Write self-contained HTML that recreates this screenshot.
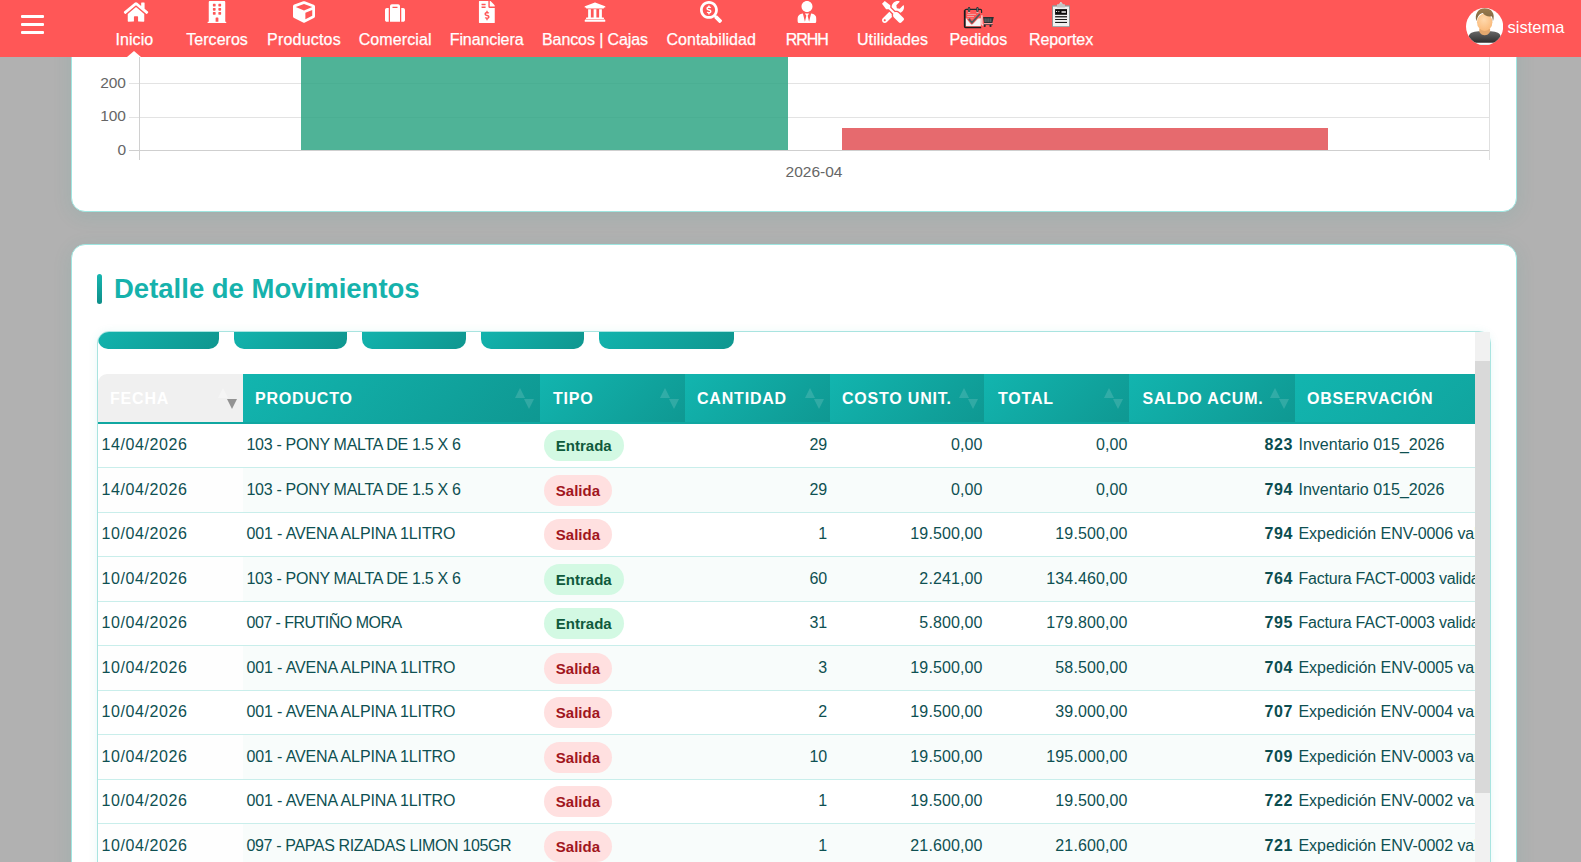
<!DOCTYPE html>
<html lang="es">
<head>
<meta charset="utf-8">
<title>Kardex - Detalle de Movimientos</title>
<style>
*{box-sizing:border-box;margin:0;padding:0}
html,body{width:1581px;height:862px;overflow:hidden}
body{background:#b1b1b1;font-family:"Liberation Sans",sans-serif;position:relative}
/* NAV */
#nav{position:absolute;left:0;top:0;width:1581px;height:57px;background:#ff5757;z-index:10}
#burger{position:absolute;left:21px;top:15px;width:23px;height:21px}
#burger i{display:block;height:3.4px;background:#fff;margin-bottom:4.4px;border-radius:1px;width:22.5px}
.ni{position:absolute;top:0;height:57px;text-align:center;color:#fff;font-size:16px;white-space:nowrap;transform:translateX(-50%)}
.ni span{position:absolute;left:50%;transform:translateX(-50%);top:30px;line-height:20px;-webkit-text-stroke:.25px #fff}
.ni svg{position:absolute;left:50%;transform:translateX(-50%);top:1px}
#tri{position:absolute;left:127px;top:51px;width:0;height:0;border-left:7px solid transparent;border-right:7px solid transparent;border-bottom:6px solid #fff}
#uname{position:absolute;left:1507.5px;top:17px;font-size:16.5px;line-height:20px;color:#fff}
/* CARDS */
.card{position:absolute;left:71px;width:1446px;background:#fff;border:1px solid #9fe6e1;border-radius:14px;box-shadow:0 4px 20px rgba(17,153,142,.10)}
#c1{top:-40px;height:252px}
#c2{top:244px;height:700px}
.gl{position:absolute;left:129px;width:1361px;height:1px;background:#e3e3e3}
/* TITLE */
#ttl{position:absolute;left:114px;top:274px;height:30px;font-size:27.5px;line-height:30px;font-weight:bold;color:#16b2ac;white-space:nowrap}
#ttl:before{content:"";position:absolute;left:-17px;top:0;width:5px;height:30px;border-radius:3px;background:linear-gradient(180deg,#17b6b0,#0e8e89)}
/* TABLE WRAP */
#tw{position:absolute;left:97px;top:331px;width:1394px;height:600px;border:1px solid #a9e4e0;border-radius:12px;overflow:hidden;background:#fff;box-shadow:0 1px 10px rgba(20,175,170,.10)}
.btn{position:absolute;top:0;height:17px;border-radius:0 0 10px 10px;background:linear-gradient(135deg,#12b3ad,#0f968f)}
#sb{position:absolute;left:1475px;top:332px;width:15px;height:600px;background:#f1f1f1}
#sb i{position:absolute;left:0;top:29px;width:15px;height:432px;background:#d9d9d9}
table{position:absolute;left:0;top:42px;border-collapse:separate;border-spacing:0;table-layout:fixed;width:1560px}
th{height:49.5px;background:linear-gradient(135deg,#12b5af,#0f9892);color:#fff;font-size:16px;font-weight:bold;text-align:left;padding:2px 0 0 12px;letter-spacing:.8px;border-bottom:2px solid #10a7a1;position:relative;white-space:nowrap}
th.s{background:#f0f0f0;border-top-left-radius:9px}
th b{position:absolute;right:6px;top:14px;width:19px;height:21px}
th b:before{content:"";position:absolute;left:0;top:0;border-left:5px solid transparent;border-right:5px solid transparent;border-bottom:10px solid rgba(255,255,255,.14)}
th b:after{content:"";position:absolute;right:0;top:10.5px;border-left:5px solid transparent;border-right:5px solid transparent;border-top:10px solid rgba(255,255,255,.14)}
th.s b:after{border-top-color:#939393;border-left-width:5.75px;border-right-width:5.75px;border-top-width:10px}
th.s b:before{border-bottom-color:rgba(255,255,255,.35)}
td{height:44.5px;font-size:16px;color:#0e5052;padding:0 3px .3px 3.5px;border-bottom:1px solid #c9eeeb;white-space:nowrap;overflow:hidden;letter-spacing:-0.3px}
tr:nth-child(even) td{background:#f8fcfb}
tr:nth-child(even) td:first-child{background:#fefefe}
td.r{text-align:right;letter-spacing:-.1px}
td.m{letter-spacing:.12px;padding-right:1.4px}
td:first-child{letter-spacing:.6px}
td:last-child{letter-spacing:0}
td.b{text-align:right;font-weight:bold;color:#0b4d50;letter-spacing:.5px;padding-right:2.2px}
.bd{display:inline-block;height:31px;line-height:31px;border-radius:15.5px;padding:0 12.3px;font-size:15px;font-weight:bold;letter-spacing:0;vertical-align:middle;position:relative;top:.5px}
.en{background:#d3f9e3;color:#0f5a3c}
.sa{background:#ffe0e0;color:#a1161d}
</style>
</head>
<body>
<div id="nav">
  <div id="burger"><i></i><i></i><i></i></div>
  <div class="ni" style="left:134.4px"><svg viewBox="0 0 576 512" width="24.75" height="22" style="top:1px;margin-left:1.45px"><path fill="#fff" d="M280.37 148.26L96 300.11V464a16 16 0 0 0 16 16l112.06-.29a16 16 0 0 0 15.92-16V368a16 16 0 0 1 16-16h64a16 16 0 0 1 16 16v95.64a16 16 0 0 0 16 16.05L464 480a16 16 0 0 0 16-16V300L295.67 148.26a12.19 12.19 0 0 0-15.3 0zM571.6 251.47L488 182.56V44.05a12 12 0 0 0-12-12h-56a12 12 0 0 0-12 12v72.61L318.47 43a48 48 0 0 0-61 0L4.34 251.47a12 12 0 0 0-1.6 16.9l25.5 31A12 12 0 0 0 45.15 301l235.22-193.74a12.19 12.19 0 0 1 15.3 0L530.9 301a12 12 0 0 0 16.9-1.6l25.5-31a12 12 0 0 0-1.7-16.93z"/></svg><span style="letter-spacing:0.07px">Inicio</span></div>
  <div class="ni" style="left:217.1px"><svg viewBox="0 0 448 512" width="19.25" height="22" style="top:1px;margin-left:-0.6px"><path fill="#fff" d="M436 480h-20V24c0-13.255-10.745-24-24-24H56C42.745 0 32 10.745 32 24v456H12c-6.627 0-12 5.373-12 12v20h448v-20c0-6.627-5.373-12-12-12zM128 76c0-6.627 5.373-12 12-12h40c6.627 0 12 5.373 12 12v40c0 6.627-5.373 12-12 12h-40c-6.627 0-12-5.373-12-12V76zm0 96c0-6.627 5.373-12 12-12h40c6.627 0 12 5.373 12 12v40c0 6.627-5.373 12-12 12h-40c-6.627 0-12-5.373-12-12v-40zm52 148h-40c-6.627 0-12-5.373-12-12v-40c0-6.627 5.373-12 12-12h40c6.627 0 12 5.373 12 12v40c0 6.627-5.373 12-12 12zm76 160h-64v-84c0-6.627 5.373-12 12-12h40c6.627 0 12 5.373 12 12v84zm64-172c0 6.627-5.373 12-12 12h-40c-6.627 0-12-5.373-12-12v-40c0-6.627 5.373-12 12-12h40c6.627 0 12 5.373 12 12v40zm0-96c0 6.627-5.373 12-12 12h-40c-6.627 0-12-5.373-12-12v-40c0-6.627 5.373-12 12-12h40c6.627 0 12 5.373 12 12v40zm0-96c0 6.627-5.373 12-12 12h-40c-6.627 0-12-5.373-12-12V76c0-6.627 5.373-12 12-12h40c6.627 0 12 5.373 12 12v40z"/></svg><span style="letter-spacing:0.02px">Terceros</span></div>
  <div class="ni" style="left:304px"><svg viewBox="0 0 512 512" width="22.0" height="22" style="top:1px;margin-left:-0.2px"><path fill="#fff" d="M239.1 6.3l-208 78c-18.7 7-31.1 25-31.1 45v225.1c0 18.2 10.3 34.8 26.5 42.9l208 104c13.5 6.8 29.4 6.8 42.9 0l208-104c16.3-8.1 26.5-24.8 26.5-42.9V129.3c0-20-12.4-37.9-31.1-44.9l-208-78C262 2.2 250 2.2 239.1 6.3zM256 68.4l192 72v1.1l-192 78-192-78v-1.1l192-72zm32 356V275.5l160-65v133.9l-160 80z"/></svg><span style="letter-spacing:0.2px">Productos</span></div>
  <div class="ni" style="left:395.1px"><svg viewBox="0 0 512 512" width="20.0" height="20" style="top:3px;margin-left:-0.1px"><path fill="#fff" d="M128 480h256V80c0-26.5-21.5-48-48-48H176c-26.5 0-48 21.5-48 48v400zm64-384h128v32H192V96zm320 80v256c0 26.5-21.5 48-48 48h-48V128h48c26.500 0 48 21.500 48 48zM96 480H48c-26.500 0-48-21.500-48-48V176c0-26.500 21.500-48 48-48h48v352z"/></svg><span style="letter-spacing:0.1px">Comercial</span></div>
  <div class="ni" style="left:486.6px"><svg viewBox="0 0 384 512" width="16.5" height="22" style="top:1px;margin-left:0.0px"><path fill="#fff" d="M377 105L279.1 7c-4.5-4.5-10.6-7-17-7H256v128h128v-6.1c0-6.300-2.500-12.400-7-16.900zm-153 31V0H24C10.700 0 0 10.700 0 24v464c0 13.300 10.700 24 24 24h336c13.300 0 24-10.700 24-24V160H248c-13.200 0-24-10.800-24-24zM64 72c0-4.420 3.580-8 8-8h80c4.420 0 8 3.580 8 8v16c0 4.420-3.580 8-8 8H72c-4.420 0-8-3.580-8-8V72zm0 80v-16c0-4.420 3.580-8 8-8h80c4.420 0 8 3.580 8 8v16c0 4.420-3.580 8-8 8H72c-4.420 0-8-3.580-8-8zm144 263.880V440c0 4.420-3.580 8-8 8h-16c-4.420 0-8-3.580-8-8v-24.290c-11.290-.58-22.270-4.520-31.370-11.350-3.900-2.930-4.100-8.770-.57-12.140l11.750-11.210c2.770-2.640 6.890-2.760 10.130-.73 3.870 2.420 8.260 3.720 12.820 3.720h28.110c6.500 0 11.800-5.920 11.800-13.190 0-5.950-3.610-11.190-8.770-12.730l-45-13.500c-18.590-5.580-31.580-23.420-31.580-43.390 0-24.520 19.050-44.440 42.670-45.070V232c0-4.420 3.580-8 8-8h16c4.420 0 8 3.580 8 8v24.290c11.290.58 22.270 4.510 31.370 11.350 3.900 2.930 4.100 8.770.57 12.140l-11.750 11.210c-2.770 2.640-6.890 2.760-10.130.73-3.870-2.430-8.260-3.720-12.820-3.720h-28.110c-6.500 0-11.800 5.920-11.800 13.190 0 5.950 3.610 11.190 8.770 12.730l45 13.500c18.590 5.580 31.580 23.420 31.580 43.390 0 24.530-19.050 44.440-42.670 45.070z"/></svg><span style="letter-spacing:-0.1px">Financiera</span></div>
  <div class="ni" style="left:595px"><svg viewBox="0 0 512 512" width="22.0" height="22" style="top:1px;margin-left:-0.25px"><path fill="#fff" d="M496 128v16a8 8 0 0 1-8 8h-24v12c0 6.627-5.373 12-12 12H60c-6.627 0-12-5.373-12-12v-12H24a8 8 0 0 1-8-8v-16a8 8 0 0 1 4.941-7.392l232-88a7.996 7.996 0 0 1 6.118 0l232 88A8 8 0 0 1 496 128zm-24 304H40c-13.255 0-24 10.745-24 24v16a8 8 0 0 0 8 8h464a8 8 0 0 0 8-8v-16c0-13.255-10.745-24-24-24zM96 192v192H60c-6.627 0-12 5.373-12 12v20h416v-20c0-6.627-5.373-12-12-12h-36V192h-64v192h-64V192h-64v192h-64V192H96z"/></svg><span style="letter-spacing:-0.1px">Bancos | Cajas</span></div>
  <div class="ni" style="left:711.2px"><svg viewBox="0 0 512 512" width="22.0" height="22" style="top:1px;margin-left:0.0px"><path fill="#fff" d="M505.04 442.66l-99.71-99.69c-4.5-4.5-10.6-7-17-7h-16.3c27.6-35.3 44-79.69 44-127.99C416.030 93.090 322.920 0 208.020 0S0 93.090 0 207.980s93.110 207.980 208.020 207.980c48.300 0 92.710-16.400 128.010-44v16.300c0 6.400 2.500 12.500 7 17l99.710 99.690c9.400 9.400 24.600 9.400 33.900 0l28.300-28.300c9.400-9.400 9.400-24.590.1-33.990zm-297.020-90.700c-79.540 0-144-64.340-144-143.980 0-79.530 64.350-143.980 144-143.980 79.540 0 144 64.340 144 143.980 0 79.530-64.350 143.980-144 143.980zm27.110-152.540l-45.010-13.500c-5.160-1.550-8.770-6.780-8.770-12.730 0-7.270 5.300-13.190 11.800-13.190h28.110c4.560 0 8.960 1.290 12.820 3.720 3.240 2.030 7.360 1.910 10.130-.73l11.750-11.210c3.530-3.370 3.330-9.210-.57-12.140-9.100-6.830-20.080-10.770-31.370-11.350V112c0-4.420-3.580-8-8-8h-16c-4.420 0-8 3.580-8 8v16.120c-23.630.63-42.680 20.550-42.680 45.070 0 19.970 12.990 37.810 31.580 43.390l45.010 13.500c5.160 1.550 8.770 6.780 8.770 12.730 0 7.270-5.300 13.190-11.800 13.190h-28.100c-4.560 0-8.960-1.290-12.820-3.720-3.240-2.030-7.360-1.910-10.130.73l-11.750 11.210c-3.530 3.370-3.330 9.210.57 12.140 9.100 6.830 20.080 10.770 31.370 11.350V304c0 4.420 3.580 8 8 8h16c4.420 0 8-3.580 8-8v-16.120c23.630-.63 42.680-20.540 42.680-45.070 0-19.970-12.990-37.810-31.590-43.390z"/></svg><span style="letter-spacing:0.05px">Contabilidad</span></div>
  <div class="ni" style="left:806.8px"><svg viewBox="0 0 448 512" width="19.25" height="22" style="top:1px;margin-left:-0.3px"><path fill="#fff" d="M224 256c70.7 0 128-57.3 128-128S294.7 0 224 0 96 57.3 96 128s57.3 128 128 128zm95.8 32.6L272 480l-32-136 32-56h-96l32 56-32 136-47.8-191.400C56.900 292 0 350.300 0 422.400V464c0 26.500 21.500 48 48 48h352c26.500 0 48-21.500 48-48v-41.600c0-72.100-56.900-130.400-128.200-133.800z"/></svg><span style="letter-spacing:-1px">RRHH</span></div>
  <div class="ni" style="left:892.6px"><svg viewBox="0 0 512 512" width="22.0" height="22" style="top:1px;margin-left:0.4px"><path fill="#fff" d="M501.1 395.7L384 278.6c-23.100-23.100-57.600-27.600-85.400-13.900L192 158.100V96L64 0 0 64l96 128h62.100l106.600 106.600c-13.600 27.800-9.200 62.300 13.900 85.400l117.100 117.100c14.600 14.600 38.200 14.600 52.700 0l52.700-52.700c14.500-14.600 14.500-38.200 0-52.700zM331.700 225c28.300 0 54.900 11 74.900 31l19.400 19.400c15.800-6.900 30.800-16.500 43.800-29.500 37.100-37.100 49.700-89.300 37.900-136.700-2.200-9-13.500-12.100-20.100-5.500l-74.400 74.400-67.900-11.300L334 98.900l74.400-74.400c6.600-6.600 3.400-17.900-5.700-20.200-47.400-11.700-99.600.9-136.600 37.900-28.500 28.500-41.900 66.100-41.200 103.600l82.100 82.100c8.100-1.900 16.500-2.900 24.700-2.900zm-103.900 82l-56.700-56.700L18.700 402.800c-25 25-25 65.500 0 90.500s65.500 25 90.500 0l123.600-123.600c-7.600-19.900-9.900-41.600-5-62.700zM64 472c-13.200 0-24-10.800-24-24 0-13.300 10.700-24 24-24s24 10.700 24 24c0 13.200-10.700 24-24 24z"/></svg><span style="letter-spacing:0.1px">Utilidades</span></div>
  <div class="ni" style="left:978.3px"><span style="letter-spacing:0px">Pedidos</span></div>
  <div class="ni" style="left:1061px"><span style="letter-spacing:-0.1px">Reportex</span></div>
  <svg style="position:absolute;left:955px;top:0" width="50" height="30" viewBox="0 0 50 30">
<rect x="9.6" y="9.4" width="16.9" height="17.2" rx="1.2" fill="#ff5757"/>
<path d="M10.4 18.2h15.4v8H10.4z" fill="#f4f4f4"/>
<path d="M11 18.2l5.9 6.4 8.6-9.6v3.2z" fill="#ff5757"/>
<path d="M12.2 14.4h8.7M12.2 16.5h6.8" stroke="#e9bcbc" stroke-width=".8" fill="none"/>
<path d="M13.9 18.9l3 3.7 8-8.6" stroke="#ff5757" stroke-width="3.4" fill="none" stroke-linejoin="round"/>
<path d="M13.9 18.9l3 3.7 8-8.6" stroke="#4d595c" stroke-width="1.7" fill="none"/>
<path d="M9.9 10.6c0-.7.5-1.2 1.200-1.200h14.300c.7 0 1.200.5 1.200 1.200v2.400M9.900 10.600V26.400" stroke="#1d2a2c" stroke-width="1.100" fill="none"/>
<path d="M9.6 10.200v16.300c0 .6.4 1 1 1h15.600" stroke="#141c1e" stroke-width="1.500" fill="none"/>
<rect x="12.900" y="7.100" width="2.300" height="4.900" rx="1.100" fill="#2b3739"/><rect x="21.300" y="7.100" width="2.300" height="4.900" rx="1.100" fill="#2b3739"/>
<path d="M14.050 8v3.200M22.450 8v3.200" stroke="#8a9799" stroke-width=".6"/>
<path d="M13 12.400h2.200M21.400 12.400h2.200" stroke="#cfe9ea" stroke-width=".7"/>
<path d="M26.900 15.200v9c0 .5.600.9 1.600.9" stroke="#f4f4f4" stroke-width="1.100" fill="none"/>
<path d="M28.100 17.100h10.700l-1.500 5.900h-8.200z" fill="#2a3032"/>
<path d="M30.100 18.400v3.600M32 18.400v3.600M33.900 18.400v3.600M35.800 18.400v3.600" stroke="#7d8486" stroke-width=".8"/>
<path d="M28.800 24h8.800" stroke="#f0f0f0" stroke-width=".9"/>
<path d="M28.800 24.600h9" stroke="#2a3032" stroke-width=".8"/>
<circle cx="29.700" cy="25.900" r="1.100" fill="#23292b"/><circle cx="35.500" cy="25.900" r="1.100" fill="#23292b"/>
</svg>
<svg style="position:absolute;left:1036px;top:0" width="50" height="30" viewBox="0 0 50 30">
<rect x="16.100" y="5.300" width="17.800" height="21.700" rx=".8" fill="#8c9c9c"/>
<rect x="17" y="6.600" width="16" height="19.600" fill="#f1f1f1"/>
<path d="M24.900 1.900l2.400 2.400h1.600v3.300h-7.900V4.300h1.600z" fill="#c2c4c4"/>
<path d="M24.900 1.900l1.200 1.300h-2.400z" fill="#d9ecec"/>
<rect x="19.100" y="9.100" width="11.900" height="5.700" fill="#0c0c0c"/>
<rect x="25.500" y="11.300" width="4.400" height="1.400" fill="#fff"/>
<rect x="20.100" y="11" width="1" height="1" fill="#fff"/><rect x="22.200" y="11.100" width="1.200" height="1" fill="#d0d0d0"/>
<rect x="19.100" y="16.100" width="11.900" height="1.300" fill="#1a1a1a"/>
<rect x="19.100" y="19" width="11.900" height="1" fill="#1a1a1a"/>
<rect x="19.100" y="21.900" width="11.900" height="1.100" fill="#1a1a1a"/>
</svg>
<div id="tri"></div>
  <svg id="avatar" style="position:absolute;left:1465.800px;top:7.800px" width="37.200" height="37.200" viewBox="0 0 37.200 37.200">
<defs><clipPath id="avc"><circle cx="18.600" cy="18.600" r="18.600"/></clipPath>
<radialGradient id="avf" cx=".45" cy=".35" r=".7"><stop offset="0" stop-color="#ffd9ad"/><stop offset="1" stop-color="#f9b877"/></radialGradient>
<linearGradient id="avs" x1="0" y1="0" x2="0" y2="1"><stop offset="0" stop-color="#686868"/><stop offset="1" stop-color="#2e2e2e"/></linearGradient>
<linearGradient id="avh" x1="0" y1="0" x2="0" y2="1"><stop offset="0" stop-color="#9a7d4e"/><stop offset="1" stop-color="#7d6340"/></linearGradient></defs>
<g clip-path="url(#avc)"><rect width="37.200" height="37.200" fill="#fff"/>
<path d="M2.800 28.500c0-3.300 4-4.800 9.700-5.300h12.400c5.700.5 9.700 2 9.700 5.300v6.300H2.800z" fill="url(#avs)"/>
<path d="M13.300 20.500h10.800v3.200c-1.200 2.400-3.200 3.500-5.400 3.500s-4.200-1.100-5.400-3.500z" fill="#e3a86e"/>
<ellipse cx="18.700" cy="14.200" rx="7.700" ry="8.700" fill="url(#avf)"/>
<path d="M10.600 13.200C7.900 6.500 12.200.2 18.700.2c6.900 0 11 5.400 8.200 13.200-.1-2.600-.5-4.200-1.300-5.200-3.700.7-7-.7-8.800-3.200-2.600.5-5.400 2.700-6.200 8.200z" fill="url(#avh)"/>
<path d="M6 35c4 1.200 21 1.200 25.500 0l-2 2.500H8z" fill="#dff0f4"/>
</g></svg>
  <div id="uname">sistema</div>
</div>

<div class="card" id="c1"></div>
<div class="card" id="c2"></div>

<div id="chart">
  <div class="gl" style="top:83px"></div>
  <div class="gl" style="top:117px"></div>
  <div class="gl" style="top:150px;background:#cfcfcf"></div>
  <div style="position:absolute;left:139px;top:57px;width:1px;height:103px;background:#d0d0d0"></div>
  <div style="position:absolute;left:1489px;top:57px;width:1px;height:103px;background:#e0e0e0"></div>
  <div style="position:absolute;left:301px;top:57px;width:486.5px;height:93px;background:rgba(48,166,133,.85)"></div>
  <div style="position:absolute;left:841.6px;top:127.7px;width:486px;height:22.3px;background:rgba(226,80,85,.85)"></div>
  <div class="lbl" style="position:absolute;left:86px;top:75px;width:40px;text-align:right;color:#666;font-size:15.5px;line-height:16px">200</div>
  <div class="lbl" style="position:absolute;left:86px;top:108px;width:40px;text-align:right;color:#666;font-size:15.5px;line-height:16px">100</div>
  <div class="lbl" style="position:absolute;left:86px;top:142px;width:40px;text-align:right;color:#666;font-size:15.5px;line-height:16px">0</div>
  <div class="lbl" style="position:absolute;left:764px;top:164px;width:100px;text-align:center;color:#666;font-size:15.5px;line-height:16px">2026-04</div>
</div>

<div id="ttl">Detalle de Movimientos</div>

<div id="tw">
  <div class="btn" style="left:0;width:121px"></div>
  <div class="btn" style="left:136px;width:113px"></div>
  <div class="btn" style="left:264px;width:104px"></div>
  <div class="btn" style="left:383px;width:103px"></div>
  <div class="btn" style="left:501px;width:135px"></div>
  <table>
    <colgroup><col style="width:145px"><col style="width:297px"><col style="width:145px"><col style="width:145px"><col style="width:154px"><col style="width:145px"><col style="width:166px"><col style="width:363px"></colgroup>
    <thead><tr>
      <th class="s">FECHA<b></b></th><th>PRODUCTO<b></b></th><th style="padding-left:13px">TIPO<b></b></th><th>CANTIDAD<b></b></th><th>COSTO UNIT.<b></b></th><th style="padding-left:14px">TOTAL<b></b></th><th style="padding-left:13.5px">SALDO ACUM.<b></b></th><th>OBSERVACIÓN<b></b></th>
    </tr></thead>
    <tbody>
      <tr><td>14/04/2026</td><td>103 - PONY MALTA DE 1.5 X 6</td><td><span class="bd en">Entrada</span></td><td class="r">29</td><td class="r m">0,00</td><td class="r m">0,00</td><td class="b">823</td><td>Inventario 015_2026</td></tr>
      <tr><td>14/04/2026</td><td>103 - PONY MALTA DE 1.5 X 6</td><td><span class="bd sa">Salida</span></td><td class="r">29</td><td class="r m">0,00</td><td class="r m">0,00</td><td class="b">794</td><td>Inventario 015_2026</td></tr>
      <tr><td>10/04/2026</td><td style="letter-spacing:-.14px">001 - AVENA ALPINA 1LITRO</td><td><span class="bd sa">Salida</span></td><td class="r">1</td><td class="r m">19.500,00</td><td class="r m">19.500,00</td><td class="b">794</td><td style="letter-spacing:-.06px">Expedición ENV-0006 validada</td></tr>
      <tr><td>10/04/2026</td><td>103 - PONY MALTA DE 1.5 X 6</td><td><span class="bd en">Entrada</span></td><td class="r">60</td><td class="r m">2.241,00</td><td class="r m">134.460,00</td><td class="b">764</td><td style="letter-spacing:-.2px">Factura FACT-0003 validada</td></tr>
      <tr><td>10/04/2026</td><td style="letter-spacing:-.52px">007 - FRUTIÑO MORA</td><td><span class="bd en">Entrada</span></td><td class="r">31</td><td class="r m">5.800,00</td><td class="r m">179.800,00</td><td class="b">795</td><td style="letter-spacing:-.2px">Factura FACT-0003 validada</td></tr>
      <tr><td>10/04/2026</td><td style="letter-spacing:-.14px">001 - AVENA ALPINA 1LITRO</td><td><span class="bd sa">Salida</span></td><td class="r">3</td><td class="r m">19.500,00</td><td class="r m">58.500,00</td><td class="b">704</td><td style="letter-spacing:-.06px">Expedición ENV-0005 validada</td></tr>
      <tr><td>10/04/2026</td><td style="letter-spacing:-.14px">001 - AVENA ALPINA 1LITRO</td><td><span class="bd sa">Salida</span></td><td class="r">2</td><td class="r m">19.500,00</td><td class="r m">39.000,00</td><td class="b">707</td><td style="letter-spacing:-.06px">Expedición ENV-0004 validada</td></tr>
      <tr><td>10/04/2026</td><td style="letter-spacing:-.14px">001 - AVENA ALPINA 1LITRO</td><td><span class="bd sa">Salida</span></td><td class="r">10</td><td class="r m">19.500,00</td><td class="r m">195.000,00</td><td class="b">709</td><td style="letter-spacing:-.06px">Expedición ENV-0003 validada</td></tr>
      <tr><td>10/04/2026</td><td style="letter-spacing:-.14px">001 - AVENA ALPINA 1LITRO</td><td><span class="bd sa">Salida</span></td><td class="r">1</td><td class="r m">19.500,00</td><td class="r m">19.500,00</td><td class="b">722</td><td style="letter-spacing:-.06px">Expedición ENV-0002 validada</td></tr>
      <tr><td>10/04/2026</td><td style="letter-spacing:-.36px">097 - PAPAS RIZADAS LIMON 105GR</td><td><span class="bd sa">Salida</span></td><td class="r">1</td><td class="r m">21.600,00</td><td class="r m">21.600,00</td><td class="b">721</td><td style="letter-spacing:-.06px">Expedición ENV-0002 validada</td></tr>
      <tr><td>09/04/2026</td><td style="letter-spacing:-.14px">001 - AVENA ALPINA 1LITRO</td><td><span class="bd sa">Salida</span></td><td class="r">1</td><td class="r m">19.500,00</td><td class="r m">19.500,00</td><td class="b">723</td><td style="letter-spacing:-.06px">Expedición ENV-0001 validada</td></tr>
    </tbody>
  </table>
</div>
<div id="sb"><i></i></div>
</body>
</html>
